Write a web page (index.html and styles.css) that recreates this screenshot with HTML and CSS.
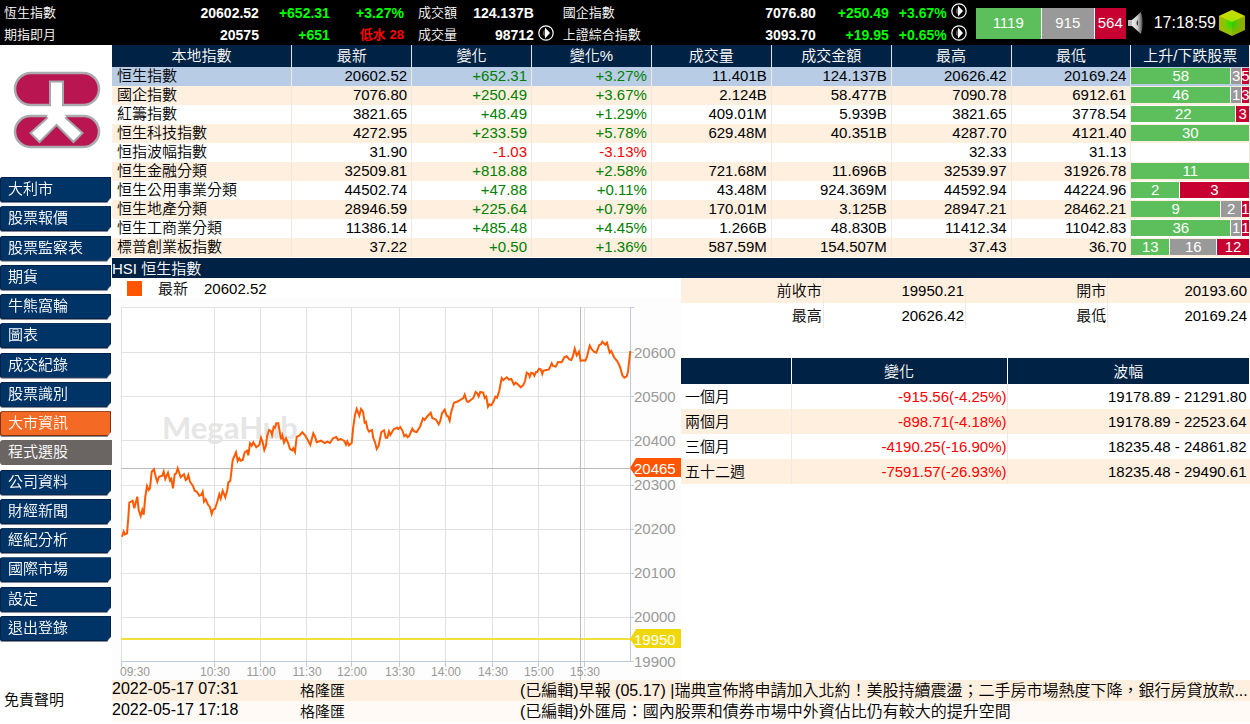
FILE: index.html
```html
<!DOCTYPE html>
<html lang="zh-Hant">
<head>
<meta charset="utf-8">
<title>大市資訊</title>
<link rel="stylesheet" href="styles.css">
</head>
<body>
<header class="topbar">
  <div class="ticker">
    <span class="label">恆生指數</span><b>20602.52</b><b class="up">+652.31</b><b class="up">+3.27%</b>
    <span class="label inset">成交額</span><b>124.137B</b><span></span>
    <span class="label">國企指數</span><b>7076.80</b><b class="up">+250.49</b><b class="up">+3.67%</b>
    <button class="next" aria-label="下一組"><svg viewBox="0 0 16 16"><circle cx="8" cy="8" r="7.2"/><path class="half" d="M8 3 5 6.500v3l3 3.500z"/><path class="tip" d="M7 2.500 12 8 7 13.500z"/></svg></button>
    <span class="label">期指即月</span><b>20575</b><b class="up">+651</b><b class="low">低水 28</b>
    <span class="label inset">成交量</span><b>98712</b>
    <button class="next" aria-label="下一組"><svg viewBox="0 0 16 16"><circle cx="8" cy="8" r="7.2"/><path class="half" d="M8 3 5 6.500v3l3 3.500z"/><path class="tip" d="M7 2.500 12 8 7 13.500z"/></svg></button>
    <span class="label">上證綜合指數</span><b>3093.70</b><b class="up">+19.95</b><b class="up">+0.65%</b>
    <button class="next" aria-label="下一組"><svg viewBox="0 0 16 16"><circle cx="8" cy="8" r="7.2"/><path class="half" d="M8 3 5 6.500v3l3 3.500z"/><path class="tip" d="M7 2.500 12 8 7 13.500z"/></svg></button>
  </div>
  <div class="breadth total"><span class="rise" style="flex-grow:65">1119</span><span class="flat" style="flex-grow:52">915</span><span class="fall" style="flex-grow:31">564</span></div>
  <button class="sound" aria-label="聲音"><svg viewBox="0 0 16 24"><defs><linearGradient id="spk" x1="0" x2="1"><stop offset="0" stop-color="#eee"/><stop offset=".6" stop-color="#ccc"/><stop offset="1" stop-color="#777"/></linearGradient></defs><path d="M1 9h4v6H1z" fill="#bbb"/><path d="M5 9 14 1v22L5 15z" fill="url(#spk)"/><path d="M14 1q3 11 0 22z" fill="#666"/><path d="M11 9q-3 3 0 6z" fill="#333"/></svg></button>
  <time class="clock">17:18:59</time>
  <svg class="cube" viewBox="0 0 28 28"><defs><radialGradient id="cb" cx=".5" cy=".52" r=".55"><stop offset="0" stop-color="#1fe000"/><stop offset=".55" stop-color="#85c800"/><stop offset="1" stop-color="#b4b000"/></radialGradient></defs><path d="M14 1 27 7v14l-13 6L1 21V7z" fill="url(#cb)"/><path d="M14 1 27 7 14 13 1 7z" fill="#e0f000" opacity=".6"/><path d="M14 13 27 7v14l-13 6z" fill="#5a7a00" opacity=".2"/></svg>
</header>
<div class="body">
  <aside class="side">
    <svg class="logo" viewBox="0 0 88 80"><g fill="#b91550" stroke="#aaabae" stroke-width="2.500"><rect x="2" y="2" width="84" height="32" rx="16"/><rect x="2" y="45" width="84" height="31" rx="15.500"/></g><g fill="#fff" stroke="#a5a6a9" stroke-width="2"><path d="M37 35V10.500h13V35"/><path d="M37 44.500 17.500 62l9 9L43.500 54l17 17 9-9L50 44.500"/></g><path d="M38 33h11v5H38zM36 40h15l2 6-9.500 6-9.500-6z" fill="#fff"/></svg>
    <nav class="menu">
      <button><span>大利市</span></button>
      <button><span>股票報價</span></button>
      <button><span>股票監察表</span></button>
      <button><span>期貨</span></button>
      <button><span>牛熊窩輪</span></button>
      <button><span>圖表</span></button>
      <button><span>成交紀錄</span></button>
      <button><span>股票識別</span></button>
      <button class="active"><span>大市資訊</span></button>
      <button class="muted"><span>程式選股</span></button>
      <button><span>公司資料</span></button>
      <button><span>財經新聞</span></button>
      <button><span>經紀分析</span></button>
      <button><span>國際市場</span></button>
      <button><span>設定</span></button>
      <button><span>退出登錄</span></button>
    </nav>
    <a class="disclaimer" href="#">免責聲明</a>
  </aside>
  <main class="main">
    <table class="indices">
      <colgroup><col class="c-name"><col class="c-num" span="7"><col class="c-bar"></colgroup>
      <thead><tr><th>本地指數</th><th>最新</th><th>變化</th><th>變化%</th><th>成交量</th><th>成交金額</th><th>最高</th><th>最低</th><th>上升/下跌股票</th></tr></thead>
      <tbody>
      <tr class="selected"><td>恒生指數</td><td>20602.52</td><td class="pos">+652.31</td><td class="pos">+3.27%</td><td>11.401B</td><td>124.137B</td><td>20626.42</td><td>20169.24</td><td><div class="breadth"><span class="rise" style="flex-grow:99">58</span><span class="flat" style="flex-grow:10">3</span><span class="fall" style="flex-grow:7">5</span></div></td></tr>
      <tr><td>國企指數</td><td>7076.80</td><td class="pos">+250.49</td><td class="pos">+3.67%</td><td>2.124B</td><td>58.477B</td><td>7090.78</td><td>6912.61</td><td><div class="breadth"><span class="rise" style="flex-grow:99">46</span><span class="flat" style="flex-grow:10">1</span><span class="fall" style="flex-grow:7">3</span></div></td></tr>
      <tr><td>紅籌指數</td><td>3821.65</td><td class="pos">+48.49</td><td class="pos">+1.29%</td><td>409.01M</td><td>5.939B</td><td>3821.65</td><td>3778.54</td><td><div class="breadth"><span class="rise" style="flex-grow:105">22</span><span class="fall" style="flex-grow:13">3</span></div></td></tr>
      <tr><td>恒生科技指數</td><td>4272.95</td><td class="pos">+233.59</td><td class="pos">+5.78%</td><td>629.48M</td><td>40.351B</td><td>4287.70</td><td>4121.40</td><td><div class="breadth"><span class="rise" style="flex-grow:1">30</span></div></td></tr>
      <tr><td>恒指波幅指數</td><td>31.90</td><td class="neg">-1.03</td><td class="neg">-3.13%</td><td></td><td></td><td>32.33</td><td>31.13</td><td></td></tr>
      <tr><td>恒生金融分類</td><td>32509.81</td><td class="pos">+818.88</td><td class="pos">+2.58%</td><td>721.68M</td><td>11.696B</td><td>32539.97</td><td>31926.78</td><td><div class="breadth"><span class="rise" style="flex-grow:1">11</span></div></td></tr>
      <tr><td>恒生公用事業分類</td><td>44502.74</td><td class="pos">+47.88</td><td class="pos">+0.11%</td><td>43.48M</td><td>924.369M</td><td>44592.94</td><td>44224.96</td><td><div class="breadth"><span class="rise" style="flex-grow:48">2</span><span class="fall" style="flex-grow:70">3</span></div></td></tr>
      <tr><td>恒生地產分類</td><td>28946.59</td><td class="pos">+225.64</td><td class="pos">+0.79%</td><td>170.01M</td><td>3.125B</td><td>28947.21</td><td>28462.21</td><td><div class="breadth"><span class="rise" style="flex-grow:89">9</span><span class="flat" style="flex-grow:20">2</span><span class="fall" style="flex-grow:7">1</span></div></td></tr>
      <tr><td>恒生工商業分類</td><td>11386.14</td><td class="pos">+485.48</td><td class="pos">+4.45%</td><td>1.266B</td><td>48.830B</td><td>11412.34</td><td>11042.83</td><td><div class="breadth"><span class="rise" style="flex-grow:99">36</span><span class="flat" style="flex-grow:10">1</span><span class="fall" style="flex-grow:7">1</span></div></td></tr>
      <tr><td>標普創業板指數</td><td>37.22</td><td class="pos">+0.50</td><td class="pos">+1.36%</td><td>587.59M</td><td>154.507M</td><td>37.43</td><td>36.70</td><td><div class="breadth"><span class="rise" style="flex-grow:38">13</span><span class="flat" style="flex-grow:46">16</span><span class="fall" style="flex-grow:32">12</span></div></td></tr>
      </tbody>
    </table>
    <h2 class="title">HSI 恒生指數</h2>
    <div class="detail">
      <section class="chart">
        <div class="legend"><i class="swatch"></i><span>最新</span><span>20602.52</span></div>
        <svg class="plot" viewBox="112 298 569 382">
          <path class="area" d="M121 307h510v355H121z"/>
          <text class="watermark" x="162" y="439">MegaHub</text>
          <path class="grid" d="M121.500 307V661M214.500 307V661M260.500 307V661M306.500 307V661M351.500 307V661M399.500 307V661M445.500 307V661M492.500 307V661M538.500 307V661M584.500 307V661M121 307.500H630M121 352.500H630M121 396.500H630M121 440.500H630M121 485.500H630M121 529.500H630M121 573.500H630M121 617.500H630"/>
          <path class="axis" d="M630.500 307V662M121 661.500H634M630 307.500h4M630 352.500h4M630 396.500h4M630 440.500h4M630 485.500h4M630 529.500h4M630 573.500h4M630 617.500h4M121.500 661v6M214.500 661v6M260.500 661v6M306.500 661v6M351.500 661v6M399.500 661v6M445.500 661v6M492.500 661v6M538.500 661v6M584.500 661v6"/>
          <path class="prev" d="M121 639H631"/>
          <path class="cross" d="M580.500 307V680M121 468.500H631"/>
          <polyline class="price" points="122,536.7 123.7,531.7 125,534.3 127,533.3 128.3,518 129.3,502.7 132.7,500.7 134.3,508.3 137.3,496.7 138.7,510 140.7,516 142.3,510 143.7,514.7 145.3,496.7 147,486 148.7,490 150,488.3 151.7,471.7 154,469.3 155.7,476.7 157.3,481.7 159,476.7 162.3,475.7 163.7,471.7 165.3,479 168,472.7 170,480.7 171.3,479 173,488.3 174.7,474.3 176.3,473.3 177.7,468.3 180.7,477.3 184,474.3 185.7,480 187,479 188.3,475 190,481.7 193,486 194.7,490.7 197,492 199.3,495.7 201.3,495 202.7,491.7 204,501.7 205.7,499.3 207.7,504 210,507.3 211.7,514 213,510 215,508.7 217.3,501.7 219.3,494.3 220.7,498.7 222.7,490.7 225.3,497.3 227.3,490 228.3,482.3 230.3,481 232.7,460 236,452.3 237.7,461 239.3,458.3 240.7,460.7 242.7,460 244.7,452.3 247,450.7 248.3,455.3 250,443.3 251.7,445.7 253.3,442.3 256.3,447.3 259.3,445 261,437.7 262.7,442.3 264.3,450 266,445.7 267,436.7 269,430 270.7,431 272,435 273.7,426.7 275,427.7 276.3,423.3 278.3,423.3 281,439.3 282.3,435.3 284,442.7 286,438.3 288,442.7 290,449 292.3,450.3 293.3,448.3 295,452 296.7,436.7 299.3,435.7 302.3,432.3 305.3,435.7 308.3,441 310.3,445 313.3,433.3 315,436.7 316.7,442.3 321,440.7 324.7,443 327.3,441.7 330,443 333,438.3 336.3,437 338,440 340.7,439 344.3,441 346,444.7 347.3,441.3 349,445.3 351.7,443 353.3,426.7 355,415 356.7,409 359.3,415.7 361,409 363,411.7 364.7,422.7 366,421.7 367.5,429 369,431.7 372,430 373.3,438.3 375,442 376.7,449 378.7,445.7 381.3,432 384,430.3 385.7,437.7 387.3,437.7 389,431.3 390.3,435 393.7,429.3 397,427.7 398.3,429 400.3,427 402.3,430.3 404.3,436.3 406,434.7 407.7,437.3 409.3,436 412.3,428.7 414,431.3 416.7,432 420,426.7 423,418.3 424.7,420 427,416.7 430.7,412.7 432.3,418 436,419.7 438.7,424.3 440.3,421 442,413.3 444.7,409.7 446.7,415.7 448,416.3 449.7,420.7 451,412.7 454,402.7 458,401.3 463.3,398 464.7,394.7 466.7,401 468.3,402 473.3,398 475.7,392 477.3,393.3 478.7,396.3 480.3,392 483.3,392.7 484.7,398 486.3,396.7 488,406.7 489.3,404.3 491.3,405.3 493.7,401 495.3,396.7 497,397.7 499,392 501.7,378 503.3,380 506.7,377.3 509,379.7 511.3,379 514,384.7 515.7,382.7 518.3,384.7 520.7,387.3 523.3,385 525,381.3 526.7,372.7 528.7,374 529.7,376.7 531.3,372.7 533,373.3 534.3,375.7 536,372 537.3,372 539,368.7 540.7,369.3 542.3,374 543.3,370.7 549,369.5 551.7,363.3 553,366 555.7,366.7 558,362 561.7,362.3 564.3,357.3 566.7,356.3 569.3,359.3 571.3,360 573,356 574.7,348.7 576.7,355.3 579,351.7 580.7,361 582.7,360.3 585.3,360.7 587,356.7 589.7,345.7 592.3,350 594.3,352 596.3,352.7 599.3,345 601,344.3 602.3,341.7 605.3,344.7 607,342.7 609.7,352.7 611.3,351 614.3,357.7 617.3,361.3 620,366.7 622.3,375.3 624.3,377.7 626.7,376.3 628,371.7 629.3,360 630.3,351"/>
          <path class="tag-now" d="M630 468l6-10h45v19h-45z"/>
          <path class="tag-prev" d="M630 639l6-10h45v19h-45z"/>
          <g class="ylab"><text x="634" y="358">20600</text><text x="634" y="402">20500</text><text x="634" y="446">20400</text><text x="634" y="490">20300</text><text x="634" y="534">20200</text><text x="634" y="578">20100</text><text x="634" y="622">20000</text><text x="634" y="667">19900</text><text class="on" x="634" y="474">20465</text><text class="on" x="634" y="645">19950</text></g>
          <g class="xlab"><text x="135" y="676">09:30</text><text x="215" y="676">10:30</text><text x="261" y="676">11:00</text><text x="307" y="676">11:30</text><text x="352" y="676">12:00</text><text x="400" y="676">13:30</text><text x="446" y="676">14:00</text><text x="493" y="676">14:30</text><text x="539" y="676">15:00</text><text x="585" y="676">15:30</text></g>
        </svg>
      </section>
      <section class="stats">
        <table class="quote">
          <tr><td>前收市</td><td>19950.21</td><td>開市</td><td>20193.60</td></tr>
          <tr><td>最高</td><td>20626.42</td><td>最低</td><td>20169.24</td></tr>
        </table>
        <table class="range">
          <colgroup><col class="r-name"><col class="r-change"><col></colgroup>
          <thead><tr><th></th><th>變化</th><th>波幅</th></tr></thead>
          <tbody>
          <tr><td>一個月</td><td class="neg">-915.56(-4.25%)</td><td>19178.89 - 21291.80</td></tr>
          <tr><td>兩個月</td><td class="neg">-898.71(-4.18%)</td><td>19178.89 - 22523.64</td></tr>
          <tr><td>三個月</td><td class="neg">-4190.25(-16.90%)</td><td>18235.48 - 24861.82</td></tr>
          <tr><td>五十二週</td><td class="neg">-7591.57(-26.93%)</td><td>18235.48 - 29490.61</td></tr>
          </tbody>
        </table>
      </section>
    </div>
    <table class="news">
      <colgroup><col class="n-date"><col class="n-source"><col></colgroup>
      <tr><td>2022-05-17 07:31</td><td>格隆匯</td><td>(已編輯)早報 (05.17) |瑞典宣佈將申請加入北約！美股持續震盪；二手房市場熱度下降，銀行房貸放款...</td></tr>
      <tr><td>2022-05-17 17:18</td><td>格隆匯</td><td>(已編輯)外匯局：國內股票和債券市場中外資佔比仍有較大的提升空間</td></tr>
    </table>
  </main>
</div>
</body>
</html>
```
FILE: styles.css
```css
* { box-sizing: border-box; }
body {
  margin: 0;
  background: #fff;
  color: #000;
  font: 350 15px/19px "Liberation Sans", Arial, "Noto Sans CJK TC", sans-serif;
}
button {
  margin: 0;
  padding: 0;
  border: 0;
  background: none;
  font: inherit;
  color: inherit;
  cursor: pointer;
}
table { border-collapse: collapse; table-layout: fixed; width: 100%; }
td, th { padding: 0; font-weight: inherit; white-space: nowrap; overflow: hidden; }

.topbar {
  display: flex;
  height: 45px;
  padding-left: 4px;
  background: #000;
  color: #fff;
}
.ticker {
  flex: 1;
  min-width: 0;
  display: grid;
  grid-template-columns:
    minmax(0, 100fr) minmax(0, 155fr) minmax(0, 71fr) minmax(0, 74fr)
    minmax(0, 64fr) minmax(0, 66fr) minmax(0, 29fr)
    minmax(0, 100fr) minmax(0, 153fr) minmax(0, 73fr) minmax(0, 58fr) minmax(0, 29fr);
  grid-auto-rows: 22px;
  padding-top: 2px;
  font-size: 14px;
  line-height: 22px;
  white-space: nowrap;
}
.ticker b { font-weight: 700; text-align: right; }
.label { font-size: 13px; }
.inset { padding-left: 14px; }
.up { color: #0f0; }
.low { color: #f00; font-size: 13px; }
.next { height: 18px; padding-left: 4px; text-align: left; line-height: 0; }
.next svg { width: 16px; height: 16px; }
.next circle { fill: none; stroke: #fff; stroke-width: 1.2; }
.next .half { fill: #555; }
.next .tip { fill: #fff; }

.breadth { display: flex; gap: 1px; height: 16px; line-height: 16px; color: #fff; background: #fff; }
.breadth span {
  flex: 1 1 0;
  min-width: 0;
  display: flex;
  justify-content: center;
  overflow: hidden;
}
.rise { background: #5cbf5c; }
.flat { background: #999; }
.fall { background: #c80032; }
.breadth.total { flex: none; width: 150px; height: 31px; margin-top: 8px; line-height: 30px; }
.sound { width: 16px; margin-left: 1px; line-height: 0; }
.sound svg { width: 16px; height: 24px; }
.clock { margin-left: 11px; font-size: 16px; line-height: 46px; }
.cube { flex: none; width: 28px; height: 28px; margin: 9px 4px 0 2px; }

.body { display: flex; }
.side { flex: none; width: 112px; display: flex; flex-direction: column; background: #fff; }
.logo { width: 88px; height: 80px; margin: 26px 0 26px 13px; }
.menu {
  display: flex;
  flex-direction: column;
  justify-content: space-between;
  height: 464px;
}
.menu button {
  display: block;
  width: 111px;
  height: 25px;
  text-align: left;
  color: #fff;
  filter: drop-shadow(0 1px 0 #889);
}
.menu span {
  display: block;
  height: 25px;
  padding-left: 8px;
  border-radius: 3px 0 0 3px;
  background: #036;
  box-shadow: inset 0 0 0 1px #012347;
  clip-path: polygon(0 0, 100% 0, 100% 20px, calc(100% - 4px) 100%, 0 100%);
  line-height: 23px;
}
.menu .active span { background: #f46a25; box-shadow: inset 0 0 0 1px #7a3310; }
.menu .muted { width: 112px; filter: none; }
.menu .muted span { background: #6a6462; box-shadow: none; clip-path: none; }
.disclaimer { margin: 49px 0 0 4px; color: #000; text-decoration: none; }

.main { flex: 1; min-width: 0; }
.indices { border-right: 1px solid #f3e8de; }
.c-name { width: 15.8%; }
.c-num { width: 10.54%; }
.indices th, .range th { background: #024; color: #fff; text-align: center; }
.indices th { height: 22px; line-height: 22px; border-right: 1px solid #dde3e8; }
.indices td {
  height: 19px;
  line-height: 17px;
  vertical-align: top;
  text-align: right;
  padding-right: 4px;
  border-right: 1px solid #f3e8de;
}
.indices td:first-child { text-align: left; padding: 0 0 0 5px; }
.indices td:last-child { padding: 1px 0 0; border-right: 0; }
.indices th:last-child { border-right: 0; }
.indices tr:nth-child(even) td, .quote tr:nth-child(odd) td, .range tr:nth-child(even) td { background: #ffefdf; }
.indices .selected td { background: #b8cde5; }
.pos { color: #008000; }
.neg { color: #f00; }
.title {
  margin: 1px 0 0;
  padding-top: 2px;
  background: #024;
  color: #fff;
  font-size: 15px;
  font-weight: inherit;
  line-height: 18px;
}

.detail { display: flex; align-items: flex-start; }
.chart { width: 50%; background: #fdfdfd; }
.legend { display: flex; align-items: center; gap: 16px; height: 20px; padding-left: 15px; background: #fff; }
.swatch { width: 15px; height: 15px; background: #f50; }
.plot { display: block; width: 100%; height: auto; }
.area { fill: #fff; }
.watermark { font: bold 31px Lato, sans-serif; fill: #e6e6e6; }
.grid { fill: none; stroke: #e2e2e2; }
.axis { fill: none; stroke: #bccbe0; }
.prev { fill: none; stroke: #f0df3c; stroke-width: 2; }
.cross { fill: none; stroke: #bbb; }
.price { fill: none; stroke: #ff5a00; stroke-width: 2; }
.tag-now { fill: #f50; }
.tag-prev { fill: #efd70a; }
.ylab { font-size: 15px; fill: #999; }
.ylab .on { fill: #fff; }
.xlab { font-size: 12px; fill: #999; text-anchor: middle; }

.stats { width: 50%; }
.quote td { height: 25px; padding-right: 1px; text-align: right; border-right: 1px solid #f3e8de; }
.quote td:last-child { padding-right: 3px; border-right: 0; }
.range { margin-top: 30px; }
.r-name { width: 110px; }
.r-change { width: 38%; }
.range th { height: 26px; border-right: 1px solid #fff; }
.range td { height: 25px; text-align: right; border-right: 1px solid #f3e8de; }
.range td:first-child { padding-left: 4px; text-align: left; }
.range td:last-child { padding-right: 3px; border-right: 0; }

.news { font-size: 16px; background: #fffaf6; }
.news tr:first-child { background: #ffefdf; }
.n-date { width: 188px; }
.n-source { width: 220px; }
.news td { height: 21px; line-height: 21px; }
.news td:first-child { line-height: 18px; vertical-align: top; }
.news td:nth-child(2) { font-size: 15px; }
```
